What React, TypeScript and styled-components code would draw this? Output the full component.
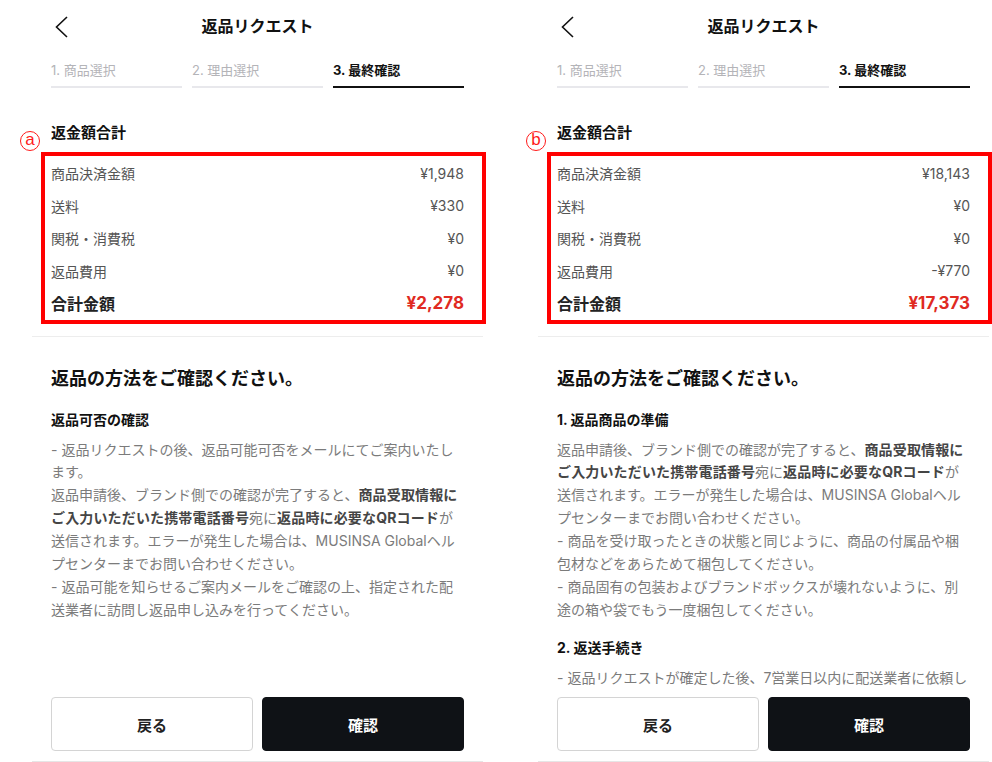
import React from "react";
import styled, { createGlobalStyle } from "styled-components";

const GlobalStyle = createGlobalStyle`
  html, body { margin: 0; padding: 0; background: #ffffff; overflow: hidden; }
  body { font-family: Inter, "Noto Sans CJK JP", "Noto Sans", sans-serif; color: #111; }
  * { box-sizing: border-box; }
`;

const Page = styled.div`
  display: flex;
  gap: 55px;
  padding-left: 32px;
  width: 992px;
  height: 762px;
`;

const Screen = styled.div`
  position: relative;
  width: 451px;
  height: 762px;
  display: flex;
  flex-direction: column;
  background: #fff;
`;

const Scroll = styled.div`
  flex: 1;
  min-height: 0;
  overflow: hidden;
`;

const Header = styled.div`
  position: relative;
  height: 52px;
  display: flex;
  align-items: center;
  justify-content: center;
`;

const BackButton = styled.div`
  position: absolute;
  left: 23px;
  top: 16px;
  width: 14px;
  height: 22px;
  display: flex;
`;

const Title = styled.h1`
  margin: 0;
  font-size: 16px;
  line-height: 22px;
  font-weight: 700;
  color: #111;
`;

const Tabs = styled.div`
  display: grid;
  grid-template-columns: repeat(3, 1fr);
  gap: 10px;
  padding: 0 19px;
`;

const Tab = styled.div<{ $active?: boolean }>`
  padding: 8px 0 6px;
  font-size: 13px;
  line-height: 20px;
  font-weight: ${(p) => (p.$active ? 700 : 400)};
  color: ${(p) => (p.$active ? "#111" : "#b4b4b8")};
  border-bottom: 2px solid ${(p) => (p.$active ? "#111" : "#e8e8ec")};
`;

const Summary = styled.section`
  padding: 34px 19px 17px;
  border-bottom: 1px solid #ededed;
`;

const SummaryTitle = styled.h2`
  margin: 0 0 13px;
  font-size: 15px;
  line-height: 22px;
  font-weight: 700;
  color: #111;
`;

const Row = styled.div<{ $total?: boolean }>`
  display: flex;
  justify-content: space-between;
  align-items: center;
  height: ${(p) => (p.$total ? "32px" : "32.5px")};
  font-size: ${(p) => (p.$total ? "16px" : "14px")};
  font-weight: ${(p) => (p.$total ? 700 : 400)};
  color: ${(p) => (p.$total ? "#222" : "#555")};
`;

const Amount = styled.span<{ $total?: boolean }>`
  font-size: ${(p) => (p.$total ? "17px" : "14px")};
  font-weight: ${(p) => (p.$total ? 700 : 400)};
  color: ${(p) => (p.$total ? "#e02a22" : "#555")};
`;

const Guide = styled.section`
  padding: 29px 19px 0;
`;

const GuideHeading = styled.h2`
  margin: 0 0 17px;
  font-size: 18px;
  line-height: 26px;
  font-weight: 700;
  color: #111;
`;

const Block = styled.div`
  & + & { margin-top: 15.6px; }
`;

const BlockTitle = styled.h3`
  margin: 0 0 7.6px;
  font-size: 14px;
  line-height: 22px;
  font-weight: 700;
  color: #111;
`;

const Body = styled.p`
  margin: 0;
  width: 412px;
  font-size: 14px;
  line-height: 22.86px;
  color: #7b7b7b;
  line-break: strict;
`;

const Strong = styled.b`
  font-weight: 700;
  color: #454545;
  letter-spacing: 0.15px;
`;

const BottomBar = styled.div`
  display: grid;
  grid-template-columns: 1fr 1fr;
  gap: 9px;
  padding: 10px 19px 10px;
  background: #fff;
  border-bottom: 1px solid #e6e6e6;
`;

const Button = styled.button<{ $primary?: boolean }>`
  height: 54px;
  border-radius: 4px;
  font-family: inherit;
  font-size: 15px;
  font-weight: 700;
  cursor: pointer;
  background: ${(p) => (p.$primary ? "#0f1216" : "#fff")};
  color: ${(p) => (p.$primary ? "#fff" : "#222")};
  border: 1px solid ${(p) => (p.$primary ? "#0f1216" : "#d4d4d4")};
`;

const Marker = styled.div`
  position: absolute;
  left: -12px;
  top: 131px;
  width: 20px;
  height: 20px;
  border-radius: 50%;
  border: 1px solid #ff1a1a;
  color: #ff1a1a;
  font-family: "Liberation Sans", sans-serif;
  font-size: 17px;
  line-height: 16px;
  text-align: center;
`;

const Highlight = styled.div`
  position: absolute;
  left: 9px;
  top: 152px;
  width: 445px;
  height: 172px;
  border: 4px solid #ff0000;
  pointer-events: none;
`;

type Line = { label: string; value: string };

type BlockData = { title: string; body: React.ReactNode };

type ScreenData = {
  marker: string;
  lines: Line[];
  total: string;
  blocks: BlockData[];
};

const qrSentence = (
  <>
    返品申請後、ブランド側での確認が完了すると、
    <Strong>商品受取情報にご入力いただいた携帯電話番号</Strong>宛に
    <Strong>返品時に必要なQRコード</Strong>
    が送信されます。エラーが発生した場合は、MUSINSA Globalヘルプセンターまでお問い合わせください。
  </>
);

const screens: ScreenData[] = [
  {
    marker: "a",
    lines: [
      { label: "商品決済金額", value: "¥1,948" },
      { label: "送料", value: "¥330" },
      { label: "関税・消費税", value: "¥0" },
      { label: "返品費用", value: "¥0" },
    ],
    total: "¥2,278",
    blocks: [
      {
        title: "返品可否の確認",
        body: (
          <>
            - 返品リクエストの後、返品可能可否をメールにてご案内いたします。
            <br />
            {qrSentence}
            <br />
            - 返品可能を知らせるご案内メールをご確認の上、指定された配送業者に訪問し返品申し込みを行ってください。
          </>
        ),
      },
    ],
  },
  {
    marker: "b",
    lines: [
      { label: "商品決済金額", value: "¥18,143" },
      { label: "送料", value: "¥0" },
      { label: "関税・消費税", value: "¥0" },
      { label: "返品費用", value: "-¥770" },
    ],
    total: "¥17,373",
    blocks: [
      {
        title: "1. 返品商品の準備",
        body: (
          <>
            {qrSentence}
            <br />
            - 商品を受け取ったときの状態と同じように、商品の付属品や梱包材などをあらためて梱包してください。
            <br />
            - 商品固有の包装およびブランドボックスが壊れないように、別途の箱や袋でもう一度梱包してください。
          </>
        ),
      },
      {
        title: "2. 返送手続き",
        body: (
          <>
            - 返品リクエストが確定した後、7営業日以内に配送業者に依頼して返品商品を発送してください。
          </>
        ),
      },
    ],
  },
];

const Chevron = () => (
  <svg width="14" height="22" viewBox="0 0 14 22" fill="none">
    <polyline points="12,1 1.5,11 12,21" stroke="#111" strokeWidth="1.6" strokeLinejoin="miter" />
  </svg>
);

const ReturnScreen = ({ data }: { data: ScreenData }) => (
  <Screen>
    <Scroll>
      <Header>
        <BackButton>
          <Chevron />
        </BackButton>
        <Title>返品リクエスト</Title>
      </Header>
      <Tabs>
        <Tab>1. 商品選択</Tab>
        <Tab>2. 理由選択</Tab>
        <Tab $active>3. 最終確認</Tab>
      </Tabs>
      <Summary>
        <SummaryTitle>返金額合計</SummaryTitle>
        {data.lines.map((l) => (
          <Row key={l.label}>
            <span>{l.label}</span>
            <Amount>{l.value}</Amount>
          </Row>
        ))}
        <Row $total>
          <span>合計金額</span>
          <Amount $total>{data.total}</Amount>
        </Row>
      </Summary>
      <Guide>
        <GuideHeading>返品の方法をご確認ください。</GuideHeading>
        {data.blocks.map((b) => (
          <Block key={b.title}>
            <BlockTitle>{b.title}</BlockTitle>
            <Body>{b.body}</Body>
          </Block>
        ))}
      </Guide>
    </Scroll>
    <BottomBar>
      <Button>戻る</Button>
      <Button $primary>確認</Button>
    </BottomBar>
    <Marker>{data.marker}</Marker>
    <Highlight />
  </Screen>
);

export default function App() {
  return (
    <>
      <GlobalStyle />
      <Page>
        {screens.map((s) => (
          <ReturnScreen key={s.marker} data={s} />
        ))}
      </Page>
    </>
  );
}
